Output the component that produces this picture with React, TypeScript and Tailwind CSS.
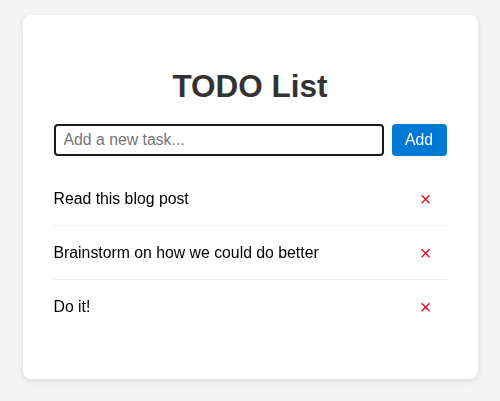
import React from "react";

const tasks = ["Read this blog post", "Brainstorm on how we could do better", "Do it!"];

export default function App() {
  return (
    <div
      className="min-h-[401px] w-full bg-[#f4f4f4] flex justify-center pt-[15px]"
      style={{ fontFamily: '"Liberation Sans", Arial, sans-serif' }}
    >
      <div className="w-[455px] h-[364px] bg-white rounded-[8px] shadow-[0_2px_6px_rgba(0,0,0,0.1)] px-[31px] pt-[32px] pb-[46px]">
        <h1 className="mt-[21px] mb-[19px] text-center text-[31.5px] leading-[37px] font-bold text-[#333]">TODO List</h1>
        <div className="flex gap-[8px]">
          <input
            autoFocus
            placeholder="Add a new task..."
            className="flex-1 h-[32px] border-[2px] border-[#1a1a1a] rounded-[4px] px-[8px] text-[15.8px] text-black placeholder:text-[#757575] outline-none"
          />
          <button className="w-[55px] h-[32px] rounded-[4px] bg-[#0078d4] text-white text-[15.8px]">Add</button>
        </div>
        <ul className="mt-[16px]">
          {tasks.map((t, i) => (
            <li
              key={t}
              className={`flex items-center justify-between h-[54px] text-[15.8px] text-black ${
                i < tasks.length - 1 ? "border-b border-[#eeeeee]" : ""
              }`}
            >
              <span>{t}</span>
              <span className="mr-[15px] text-[20px] leading-none text-[#e0102a]">×</span>
            </li>
          ))}
        </ul>
      </div>
    </div>
  );
}
